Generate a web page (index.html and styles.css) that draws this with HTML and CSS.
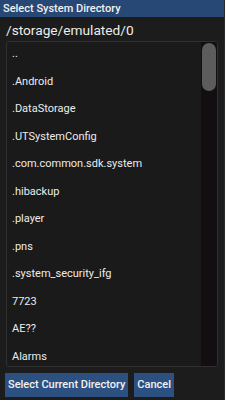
FILE: index.html
```html
<!DOCTYPE html>
<html>
<head>
<meta charset="utf-8">
<link rel="stylesheet" href="styles.css">
</head>
<body>
<div class="dialog">
  <div class="title">Select System Directory</div>
  <div class="path">/storage/emulated/0</div>
  <div class="listbox">
    <div class="list">
      <div class="item">..</div>
      <div class="item">.Android</div>
      <div class="item">.DataStorage</div>
      <div class="item">.UTSystemConfig</div>
      <div class="item">.com.common.sdk.system</div>
      <div class="item">.hibackup</div>
      <div class="item">.player</div>
      <div class="item">.pns</div>
      <div class="item">.system_security_ifg</div>
      <div class="item">7723</div>
      <div class="item">AE??</div>
      <div class="item">Alarms</div>
    </div>
    <div class="track"><div class="thumb"></div></div>
  </div>
  <div class="buttons">
    <div class="btn">Select Current Directory</div>
    <div class="btn">Cancel</div>
  </div>
</div>
</body>
</html>
```
FILE: styles.css
```css
html, body {
  margin: 0;
  padding: 0;
  background: #1c1c1c;
}
.dialog {
  width: 225px;
  height: 400px;
  display: flex;
  flex-direction: column;
  font-family: Roboto, "Liberation Sans", sans-serif;
  color: #ececec;
  overflow: hidden;
  border-right: 1px solid #2a2a2a;
  box-sizing: border-box;
}
.title {
  height: 17px;
  background: #274775;
  color: #f2f2f2;
  font-size: 11px;
  font-weight: 500;
  line-height: 17px;
  padding-left: 3px;
  white-space: nowrap;
}
.path {
  height: 24px;
  line-height: 27px;
  font-size: 13.7px;
  padding-left: 6px;
  white-space: nowrap;
}
.listbox {
  margin: 0 6px 0 6px;
  height: 324px;
  border: 1px solid #2f2f2f;
  border-radius: 2px;
  background: #1a1a1a;
  display: flex;
  overflow: hidden;
}
.list {
  flex: 1;
  margin-top: -2px;
}
.item {
  height: 27.5px;
  line-height: 27.5px;
  font-size: 11px;
  padding-left: 5px;
  white-space: nowrap;
}
.track {
  width: 16px;
  background: #120e12;
  padding: 1px 1px 0 1px;
  box-sizing: border-box;
}
.thumb {
  height: 48px;
  background: #5c5c5c;
  border-radius: 7px;
}
.buttons {
  display: flex;
  gap: 6px;
  padding: 6px 0 0 5px;
}
.btn {
  background: #2c5181;
  color: #f2f2f2;
  font-size: 11px;
  font-weight: 500;
  height: 24px;
  line-height: 24px;
  padding: 0 3px;
  white-space: nowrap;
}
```
